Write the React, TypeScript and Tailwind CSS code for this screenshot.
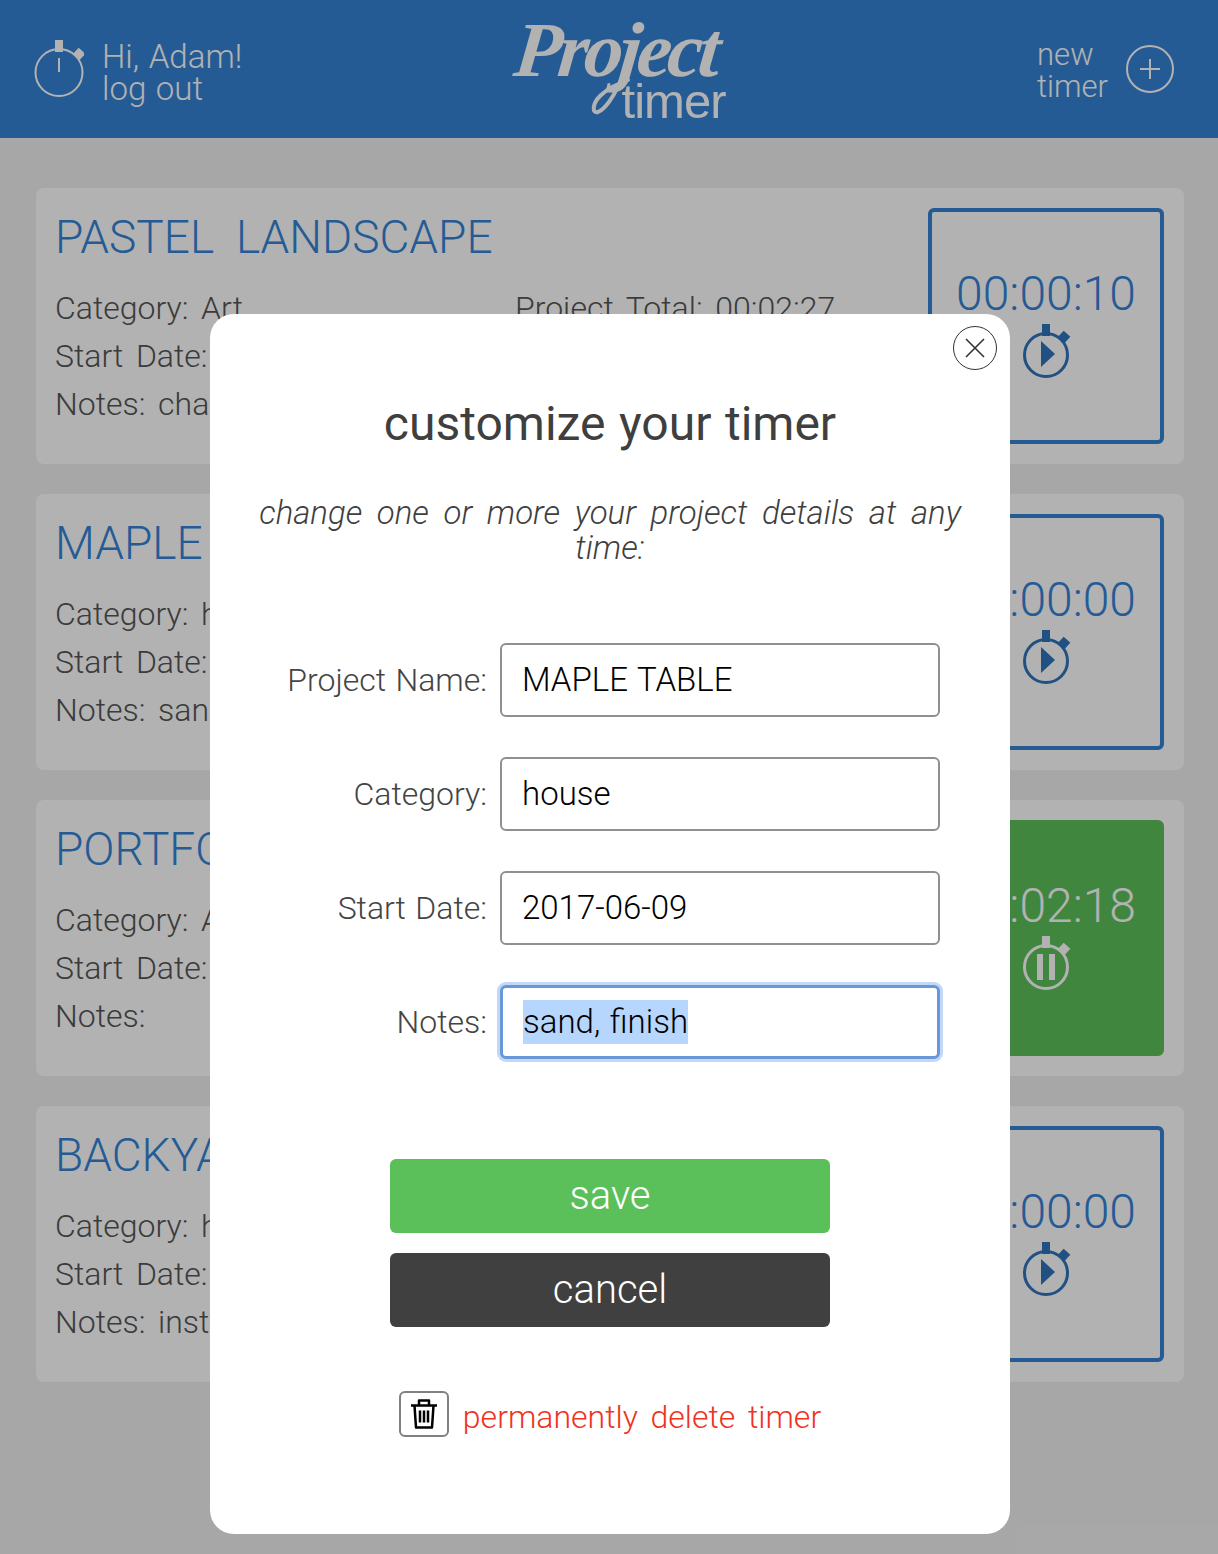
type IconProps = {
  color: string;
  cy: number;
  r: number;
  sw: number;
  side: [number, number];
  children?: React.ReactNode;
};

const Stopwatch = ({ color, cy, r, sw, side, children }: IconProps) => (
  <svg width="50" height="58" viewBox="0 0 50 58" fill="none">
    <rect x="21" y="0" width="8" height="12" fill={color} />
    <rect
      x={side[0] - 4.5}
      y={side[1] - 4.5}
      width="9"
      height="9"
      fill={color}
      transform={`rotate(42 ${side[0]} ${side[1]})`}
    />
    <circle cx="25" cy={cy} r={r} stroke={color} strokeWidth={sw} />
    {children}
  </svg>
);

const TimerIcon = ({ color, paused }: { color: string; paused?: boolean }) => (
  <Stopwatch color={color} cy={31} r={21.5} sw={3} side={[43, 13]}>
    {paused ? (
      <>
        <rect x="16" y="18" width="6" height="26" fill={color} />
        <rect x="28" y="18" width="6" height="26" fill={color} />
      </>
    ) : (
      <polygon points="20,17 34,30 20,43" fill={color} />
    )}
  </Stopwatch>
);

type Project = {
  title: string;
  category: string;
  start: string;
  notes: string;
  total: string;
  time: string;
  running?: boolean;
};

const projects: Project[] = [
  { title: "PASTEL LANDSCAPE", category: "Art", start: "2017-05-22", notes: "charcoal", total: "00:02:27", time: "00:00:10" },
  { title: "MAPLE TABLE", category: "house", start: "2017-06-09", notes: "sand, finish", total: "00:14:02", time: "00:00:00" },
  { title: "PORTFOLIO", category: "Art", start: "2017-04-30", notes: "", total: "00:31:40", time: "00:02:18", running: true },
  { title: "BACKYARD SHED", category: "house", start: "2017-03-14", notes: "install", total: "01:05:12", time: "00:00:00" },
];

const Card = ({ p }: { p: Project }) => (
  <div className="flex h-[276px] justify-between rounded-lg bg-white py-5 pl-[19px] pr-5">
    <div className="flex-1 text-[32px] leading-[48px] text-[#555] [word-spacing:0.15em]">
      <h2 className="mb-[19px] mt-[1px] text-[46px] leading-[56px] text-[#3683d6] [word-spacing:0.23em]">{p.title}</h2>
      <div className="grid grid-cols-[460px_1fr]">
        <div>Category: {p.category}</div>
        <div>Project Total: {p.total}</div>
        <div>Start Date: {p.start}</div>
        <div />
        <div>Notes: {p.notes}</div>
      </div>
    </div>
    <div
      className={`flex h-[236px] w-[236px] flex-col items-center rounded-md border-4 pt-[54px] ${
        p.running ? "border-[#5cc05a] bg-[#5cc05a] text-white" : "border-[#3683d6] text-[#3683d6]"
      }`}
    >
      <div className="text-[48px] leading-[56px]">{p.time}</div>
      <div className="mt-[2px]">
        <TimerIcon color={p.running ? "#ffffff" : "#3073bb"} paused={p.running} />
      </div>
    </div>
  </div>
);

const Field = ({ label, value, focused }: { label: string; value: string; focused?: boolean }) => (
  <div className="flex items-center">
    <div className="w-[290px] pr-[13px] text-right text-[32px] text-[#444]">{label}</div>
    <div
      className={`flex h-[74px] w-[440px] items-center rounded-md bg-white px-[20px] text-[33px] text-black ${
        focused
          ? "border-[3px] border-[#6a97d8] shadow-[0_0_0_3px_#c2d8f8]"
          : "border-2 border-[#909090]"
      }`}
    >
      {focused ? <span className="bg-[#b6d6fd] py-[2px] leading-[40px]">{value}</span> : value}
    </div>
  </div>
);

export default function App() {
  return (
    <div className="relative h-[1554px] overflow-hidden bg-[#f0f0f0] font-['Roboto',sans-serif] font-light [word-spacing:0.1em]">
      <header className="flex h-[138px] items-center justify-between bg-[#3683d6] pl-[34px] pr-[44px] text-white">
        <div className="flex items-center gap-[18px]">
          <Stopwatch color="#ffffff" cy={32.5} r={23.5} sw={2} side={[45, 14]}>
            <rect x="24" y="18" width="2" height="14" fill="#ffffff" />
          </Stopwatch>
          <div className="pt-[7px] text-[33px] leading-[32px]">
            <div>Hi, Adam!</div>
            <div>log out</div>
          </div>
        </div>
        <div className="relative h-[138px] w-[240px]">
          <div className="absolute left-[-5px] top-[22px] -skew-x-6 font-['Liberation_Serif',serif] text-[78px] font-bold italic leading-[56px] tracking-[-4px] [word-spacing:0]">
            Project
          </div>
          <svg className="absolute left-[70px] top-[60px]" width="50" height="60" viewBox="0 0 50 60" fill="none">
            <path d="M36 6 C30 26 18 48 8 52 C2 54 2 44 10 36 C18 28 28 24 38 20" stroke="#ffffff" strokeWidth="4" strokeLinecap="round" />
          </svg>
          <div className="absolute left-[102px] top-[78px] font-['Liberation_Sans',sans-serif] text-[49px] font-normal leading-[46px] tracking-[-1px]">
            timer
          </div>
        </div>
        <div className="flex items-center gap-[18px]">
          <div className="pt-[4px] text-[31px] leading-[32px]">
            <div>new</div>
            <div>timer</div>
          </div>
          <div className="flex h-[48px] w-[48px] items-center justify-center rounded-full border-2 border-white">
            <svg width="22" height="22" viewBox="0 0 22 22" stroke="#ffffff" strokeWidth="2">
              <path d="M11 1v20M1 11h20" />
            </svg>
          </div>
        </div>
      </header>

      <main className="flex flex-col gap-[30px] pl-[36px] pr-[34px] pt-[50px]">
        {projects.map((p) => (
          <Card key={p.title} p={p} />
        ))}
      </main>

      <div className="absolute inset-0 bg-black/30" />

      <div className="absolute left-[210px] top-[314px] flex h-[1220px] w-[800px] flex-col items-center rounded-[24px] bg-white">
        <button className="absolute right-[13px] top-[12px] flex h-[44px] w-[44px] items-center justify-center rounded-full border-[1.5px] border-[#333]">
          <svg width="22" height="22" viewBox="0 0 22 22" stroke="#333" strokeWidth="1.6">
            <path d="M2 2l18 18M20 2L2 20" />
          </svg>
        </button>
        <h1 className="mt-[80px] text-[48px] font-normal leading-[60px] text-[#3f3f3f]">customize your timer</h1>
        <p className="mt-[41px] w-[720px] text-center text-[33px] italic leading-[35px] text-[#3f3f3f] [word-spacing:0.2em]">
          change one or more your project details at any time:
        </p>
        <div className="mt-[78px] flex w-full flex-col gap-[40px]">
          <Field label="Project Name:" value="MAPLE TABLE" />
          <Field label="Category:" value="house" />
          <Field label="Start Date:" value="2017-06-09" />
          <Field label="Notes:" value="sand, finish" focused />
        </div>
        <button className="mt-[100px] h-[74px] w-[440px] rounded-md bg-[#5cc05a] text-[40px] text-white">save</button>
        <button className="mt-[20px] h-[74px] w-[440px] rounded-md bg-[#404040] text-[40px] text-white">cancel</button>
        <div className="mt-[60px] flex items-center gap-[14px]">
          <div className="flex h-[46px] w-[50px] items-center justify-center rounded-md border-2 border-[#808080]">
            <svg width="26" height="30" viewBox="0 0 26 30" fill="none" stroke="#000" strokeWidth="2.5" strokeLinejoin="round">
              <path d="M0 6.5h26M8 6V1.5h10V6M3.5 6.5l1.5 22h16l1.5-22" />
              <path d="M9 11.5v12M13 11.5v12M17 11.5v12" />
            </svg>
          </div>
          <span className="pt-[6px] text-[32px] text-[#f0321e] [word-spacing:0.15em]">permanently delete timer</span>
        </div>
      </div>
    </div>
  );
}
